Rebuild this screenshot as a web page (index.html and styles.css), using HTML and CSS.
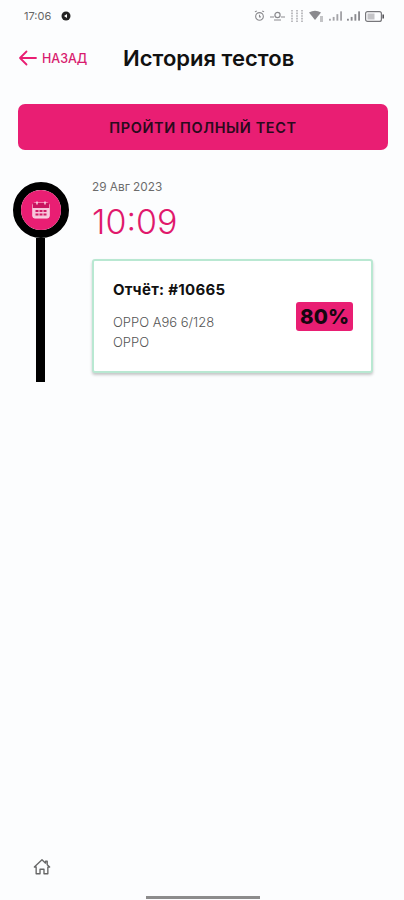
FILE: index.html
```html
<!DOCTYPE html>
<html lang="ru">
<head>
    <meta charset="UTF-8">
    <meta name="viewport" content="width=device-width, initial-scale=1.0">
    <title>История тестов</title>
    <link rel="stylesheet" href="styles.css">
</head>
<body>
    <div class="status-bar">
        <div class="status-left">
            <span class="status-time">17:06</span>
            <svg class="status-dot" width="10" height="10" viewBox="0 0 10 10"><circle cx="5" cy="5" r="4.5" fill="#222"/><path d="M3 5l3-2v4z" fill="#fff"/></svg>
        </div>
        <div class="status-icons">
            <svg width="11" height="12" viewBox="0 0 12 13" fill="none" stroke="#8a8a8e" stroke-width="1.2"><circle cx="6" cy="7" r="4.2"/><path d="M1 2l2-1M11 2L9 1M6 5v2.500h1.500"/></svg>
            <svg width="15" height="11" viewBox="0 0 15 11" fill="none" stroke="#8a8a8e" stroke-width="1.2"><circle cx="7.500" cy="4" r="2.600"/><path d="M0 6h4M11 6h4M4 9h7"/></svg>
            <svg width="14" height="14" viewBox="0 0 14 14" fill="none" stroke="#9c9ca0" stroke-width="1.3" stroke-dasharray="1.6 1"><path d="M2 1v12M7 1v12M12 1v12"/></svg>
            <svg width="15" height="12" viewBox="0 0 15 12"><path d="M0 2.500Q6-1 12 2.500L6 10z" fill="#8a8a8e"/><path d="M11 7h3M11 9h3M11 11h3" stroke="#8a8a8e" stroke-width="1"/></svg>
            <svg width="13" height="10" viewBox="0 0 14 10" fill="#a4a4a8"><rect x="0" y="8" width="2" height="2"/><rect x="4" y="6" width="2" height="4"/><rect x="8" y="3" width="2" height="7"/><rect x="12" y="0" width="2" height="10"/></svg>
            <svg width="13" height="10" viewBox="0 0 14 10" fill="#8a8a8e"><rect x="0" y="8" width="2" height="2"/><rect x="4" y="6" width="2" height="4"/><rect x="8" y="3" width="2" height="7"/><rect x="12" y="0" width="2" height="10"/></svg>
            <svg width="19" height="11" viewBox="0 0 19 11"><rect x=".6" y=".6" width="15.800" height="9.800" rx="2" fill="none" stroke="#77777b" stroke-width="1.2"/><rect x="2.500" y="2.500" width="7" height="6" fill="#c4c4c7"/><rect x="17.400" y="3.500" width="1.600" height="4" fill="#55555a"/></svg>
        </div>
    </div>

    <header class="top-bar">
        <a class="back-link">
            <svg width="19" height="16" viewBox="0 0 19 16" fill="none" stroke="#e91e73" stroke-width="1.800" stroke-linecap="round" stroke-linejoin="round"><path d="M18 8H2M8.500 1.500L2 8l6.500 6.500"/></svg>
            <span>НАЗАД</span>
        </a>
        <h1>История тестов</h1>
    </header>

    <button class="full-test" type="button">ПРОЙТИ ПОЛНЫЙ ТЕСТ</button>

    <section class="timeline">
        <div class="timeline-rail">
            <div class="timeline-knob">
                <div class="timeline-disc">
                    <svg width="18" height="18" viewBox="0 0 18 18" fill="none"><rect x=".8" y="2" width="16.400" height="15" rx="2" fill="#f7c5da" stroke="#f9dbe7" stroke-width="1"/><rect x=".8" y="2" width="16.400" height="5" fill="#c9145f"/><path d="M5 .5v3M13 .5v3" stroke="#f9dbe7" stroke-width="1.400"/><path d="M3.500 10h3M7.500 10h3M11.500 10h3M3.500 13.500h3M7.500 13.500h3M11.500 13.500h3" stroke="#d01b66" stroke-width="2"/></svg>
                </div>
            </div>
            <div class="timeline-line"></div>
        </div>
        <div class="timeline-body">
            <div class="entry-date">29 Авг 2023</div>
            <div class="entry-time">10:09</div>
            <div class="report-card">
                <div class="report-info">
                    <div class="report-title">Отчёт: #10665</div>
                    <div class="report-device">OPPO A96 6/128</div>
                    <div class="report-device">OPPO</div>
                </div>
                <div class="report-score">80%</div>
            </div>
        </div>
    </section>

    <nav class="bottom-nav">
        <svg width="18" height="18" viewBox="0 0 20 20" fill="none" stroke="#666" stroke-width="1.500" stroke-linejoin="round"><path d="M1.500 10L10 2l4 3.700V3.500h1.800v4L18.500 10H16.500v7.500h-4.300v-5H7.800v5H3.500V10z"/></svg>
    </nav>
    <div class="home-indicator"></div>
</body>
</html>
```

FILE: styles.css
```css
body {
    font-family: Inter, "Noto Sans", sans-serif;
    margin: 0;
    padding: 0;
    background: #fcfdfe;
    color: #111;
    height: 900px;
    display: flex;
    flex-direction: column;
    overflow: hidden;
}
.status-bar {
    height: 32px;
    padding: 0 20px 0 24px;
    display: flex;
    align-items: center;
    justify-content: space-between;
}
.status-left {
    display: flex;
    align-items: center;
    gap: 10px;
}
.status-time {
    font-size: 11px;
    color: #666;
}
.status-icons {
    display: flex;
    align-items: center;
    gap: 5px;
}
.top-bar {
    height: 50px;
    margin-top: 1px;
    margin-bottom: 2px;
    padding-left: 18px;
    display: flex;
    align-items: center;
}
.back-link {
    display: flex;
    align-items: center;
    gap: 5px;
    color: #d81b6e;
    font-size: 12.500px;
    font-weight: 500;
    width: 105px;
}
.top-bar h1 {
    margin: 0;
    font-size: 22px;
    font-weight: 600;
    color: #111;
}
.full-test {
    margin: 19px 16px 0 18px;
    height: 46px;
    border: 0;
    border-radius: 7px;
    background: #e91e73;
    color: #2a0a1c;
    font-family: inherit;
    font-size: 14.500px;
    font-weight: 600;
    letter-spacing: 0.600px;
}
.timeline {
    margin-top: 32px;
    padding-left: 13px;
    display: flex;
}
.timeline-rail {
    width: 56px;
    height: 200px;
    display: flex;
    flex-direction: column;
    align-items: center;
}
.timeline-knob {
    width: 56px;
    height: 56px;
    box-sizing: border-box;
    border-radius: 50%;
    border: 8px solid #000;
    flex: none;
}
.timeline-disc {
    width: 40px;
    height: 40px;
    border-radius: 50%;
    background: #e91e73;
    display: flex;
    align-items: center;
    justify-content: center;
}
.timeline-line {
    width: 9px;
    margin-right: 2px;
    flex: 1;
    background: #000;
}
.timeline-body {
    margin-left: 23px;
    width: 281px;
}
.entry-date {
    font-size: 11.800px;
    color: #6c6c6c;
    line-height: 14px;
    margin-top: -2px;
}
.entry-time {
    margin-top: 7px;
    font-size: 34px;
    font-weight: 300;
    line-height: 42px;
    color: #e0196c;
}
.report-card {
    margin-top: 16px;
    width: 281px;
    height: 114px;
    box-sizing: border-box;
    padding: 0 18px 0 19px;
    background: #fff;
    border: 2px solid #b9e8d2;
    border-radius: 3px;
    box-shadow: 0 2px 3px rgba(0, 0, 0, 0.22);
    display: flex;
    align-items: center;
    justify-content: space-between;
}
.report-title {
    font-size: 15px;
    font-weight: 700;
    color: #111;
    margin-bottom: 13px;
    letter-spacing: 0.300px;
}
.report-device {
    font-size: 13px;
    font-weight: 300;
    line-height: 20px;
    color: #555;
}
.report-score {
    background: #e91e73;
    color: #160610;
    border-radius: 3px;
    padding: 0 4px;
    height: 29px;
    line-height: 29px;
    font-size: 20.500px;
    font-weight: 800;
}
.bottom-nav {
    margin-top: auto;
    padding-left: 33px;
    height: 21px;
}
.home-indicator {
    margin: 17px 0 1px 146px;
    width: 114px;
    height: 3px;
    background: #8c8c8c;
}
```
